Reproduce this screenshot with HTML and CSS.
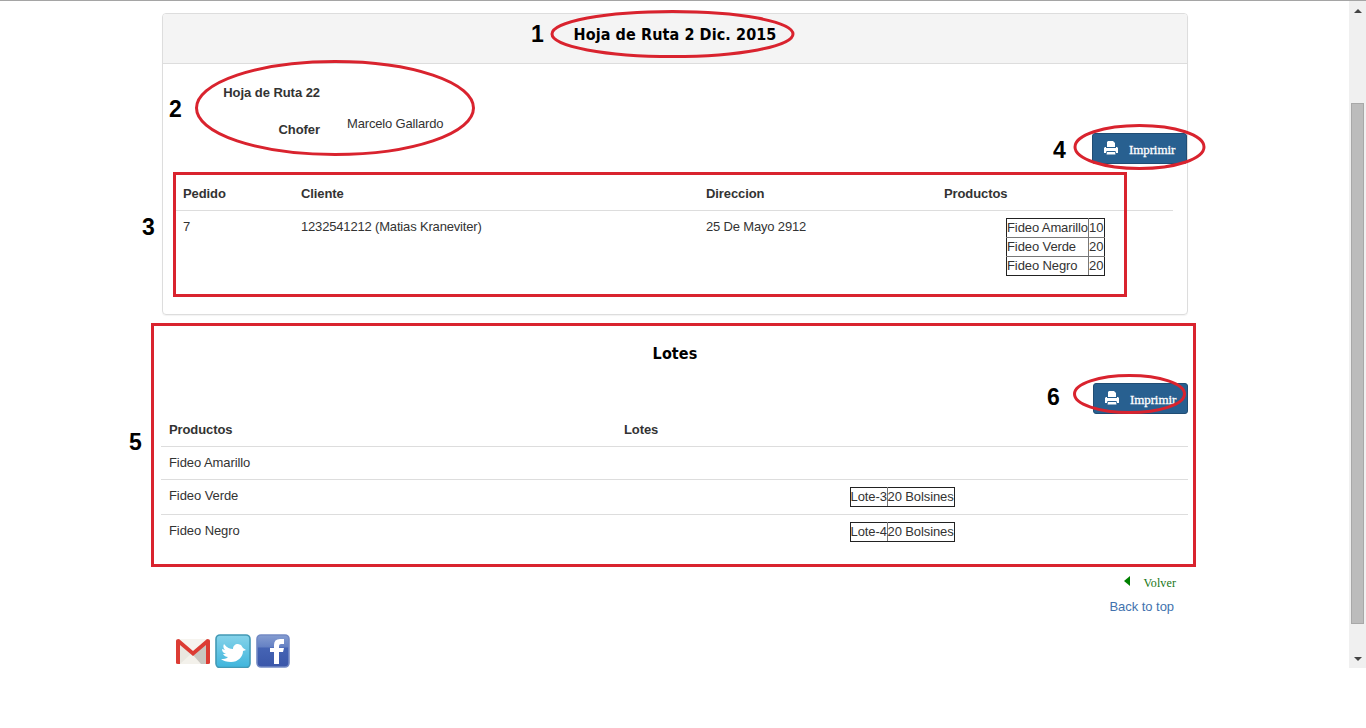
FILE: index.html
```html
<!DOCTYPE html>
<html lang="es">
<head>
<meta charset="utf-8">
<title>Hoja de Ruta</title>
<link rel="stylesheet" href="styles.css">
</head>
<body>
<div class="viewport">
  <main class="container">
    <section class="panel">
      <header class="panel-heading"><h1 class="title">Hoja de Ruta 2 Dic. 2015</h1></header>
      <div class="panel-body">
        <div class="info">
          <span class="label">Hoja de Ruta 22</span><span></span>
          <span class="label">Chofer</span><span class="value">Marcelo Gallardo</span>
        </div>
        <div class="actions">
          <button class="btn"><svg class="printer" viewBox="0 0 14 14"><path d="M4 0h5l2 2v4H3V1z M1 6h1v1h10V6h1l1 1v5h-2l-.5-2h-9L2 12H0V7z M3 11h8l.5 2.500h-9z"/></svg><span class="btn-text">Imprimir</span></button>
        </div>
        <table class="table orders">
          <thead><tr><th class="c-order">Pedido</th><th class="c-client">Cliente</th><th class="c-address">Direccion</th><th>Productos</th></tr></thead>
          <tbody><tr><td>7</td><td>1232541212 (Matias Kraneviter)</td><td>25 De Mayo 2912</td><td>
            <table class="inner inner-products">
              <tr><td class="name">Fideo Amarillo</td><td>10</td></tr>
              <tr><td class="name">Fideo Verde</td><td>20</td></tr>
              <tr><td class="name">Fideo Negro</td><td>20</td></tr>
            </table></td></tr></tbody>
        </table>
      </div>
    </section>
    <section class="lots">
      <h2 class="title">Lotes</h2>
      <div class="actions">
        <button class="btn"><svg class="printer" viewBox="0 0 14 14"><path d="M4 0h5l2 2v4H3V1z M1 6h1v1h10V6h1l1 1v5h-2l-.5-2h-9L2 12H0V7z M3 11h8l.5 2.500h-9z"/></svg><span class="btn-text">Imprimir</span></button>
      </div>
      <table class="table">
        <thead><tr><th class="c-product">Productos</th><th>Lotes</th></tr></thead>
        <tbody>
          <tr><td>Fideo Amarillo</td><td></td></tr>
          <tr class="tall"><td>Fideo Verde</td><td><table class="inner inner-lots"><tr><td class="lot">Lote-3</td><td>20 Bolsines</td></tr></table></td></tr>
          <tr class="tall"><td>Fideo Negro</td><td><table class="inner inner-lots"><tr><td class="lot">Lote-4</td><td>20 Bolsines</td></tr></table></td></tr>
        </tbody>
      </table>
    </section>
    <nav class="links">
      <a class="back"><svg class="arrow" viewBox="0 0 6 10"><path d="M6 0v10L0 5z"/></svg>Volver</a>
      <a class="top">Back to top</a>
    </nav>
    <footer class="social">
      <svg class="gmail" viewBox="0 0 36 26">
        <rect x="1" y="1" width="34" height="25" rx="2" fill="#e9e7e0"/>
        <path d="M5 26 18 14 31 26z" fill="#f3f1eb"/><path d="M31 5v21H26l-8-9z" fill="#c9c7c1"/>
        <path d="M3 1h30L18 14z" fill="#f6f4ef"/>
        <path d="M1 3q0-2 3-2l14 12L32 1q3 0 3 2v22q0 1-2 1h-2V7L18 18 5 7v19H3q-2 0-2-1z" fill="#dc3c34"/>
      </svg>
      <svg class="twitter" viewBox="0 0 36 34">
        <defs><linearGradient id="sky" x2="0" y2="1"><stop offset="0" stop-color="#86d3ea"/><stop offset="1" stop-color="#3fb5dc"/></linearGradient></defs>
        <rect x="1" y="1" width="34" height="32.500" rx="4" fill="url(#sky)" stroke="#4399b5" stroke-width="1.6"/>
        <path d="M9 10c3 4 6 5 9 5 0-3 2-5 5-5l3 1 2 3 3 2-3 1c0 6-5 11-12 11-4 0-8-1-10-3 3 0 5 0 7-2-2 0-4-1-5-3h3c-3-1-4-3-4-5l3 1c-2-2-2-4-1-6z" fill="#fff"/>
      </svg>
      <svg class="facebook" viewBox="0 0 34 34">
        <defs><linearGradient id="royal" x2="0" y2="1"><stop offset="0" stop-color="#859dd1"/><stop offset=".38" stop-color="#6480c3"/><stop offset=".4" stop-color="#4564b4"/><stop offset="1" stop-color="#3a56a9"/></linearGradient></defs>
        <rect x="1" y="1" width="32" height="32" rx="4" fill="url(#royal)" stroke="#7389c4" stroke-width="1.6"/>
        <path d="M18 30V18h-4v-4h4v-3q0-6 6-6h4v5h-3q-2 0-2 2v2h5l-1 4h-4v12z" fill="#fff"/>
      </svg>
    </footer>
  </main>
  <aside class="scrollbar">
    <svg class="step" viewBox="0 0 8 4"><path d="M4 0l4 4H0z"/></svg>
    <div class="thumb"></div>
    <svg class="step" viewBox="0 0 8 4"><path d="M0 0h8L4 4z"/></svg>
  </aside>
</div>
<svg class="notes" viewBox="0 0 1366 728">
  <g class="marks">
    <ellipse cx="672.5" cy="34" rx="120.5" ry="22.5"/>
    <ellipse cx="335" cy="108" rx="138.5" ry="46.5"/>
    <ellipse cx="1139.5" cy="147" rx="64.5" ry="21.5"/>
    <ellipse cx="1129.5" cy="394" rx="55" ry="18.5"/>
    <rect x="174.5" y="173.5" width="951" height="122"/>
    <rect x="152.5" y="324.5" width="1042" height="241"/>
  </g>
  <g class="numbers">
    <text x="531" y="42">1</text><text x="169" y="117">2</text><text x="142" y="235">3</text>
    <text x="1053" y="158">4</text><text x="129" y="450">5</text><text x="1047" y="405">6</text>
  </g>
</svg>
</body>
</html>
```
FILE: styles.css
```css
* { box-sizing: border-box; }
body { margin: 0; background: #fff; color: #333; font: 13px/18px "Liberation Sans", Arial, sans-serif; overflow: hidden; }
.viewport { display: flex; justify-content: space-between; height: 668px; border-top: 1px solid #a5a5a5; }
.container { width: 1026px; margin-left: 162px; padding-top: 12px; }
.panel { height: 302px; border: 1px solid #ddd; border-radius: 4px; box-shadow: 0 1px 1px rgba(0,0,0,.05); }
.panel-heading { height: 50px; padding-top: 9px; background: #f4f4f4; border-bottom: 1px solid #ddd; border-radius: 3px 3px 0 0; }
.title { margin: 0; font: bold 16px/24px "DejaVu Sans Condensed", "DejaVu Sans", sans-serif; font-stretch: condensed; letter-spacing: .1px; color: #000; text-align: center; }
.panel-body { padding: 20px 0 0; }
.info { display: grid; grid-template-columns: 157px 1fr; column-gap: 27px; row-gap: 19px; height: 49px; }
.label { font-weight: bold; text-align: right; letter-spacing: -.05px; }
.value { margin-top: -6px; letter-spacing: -.17px; }
.actions { display: flex; justify-content: flex-end; }
.btn { display: flex; align-items: center; width: 95px; height: 31px; padding: 0 0 0 11px; border: 1px solid #204d74; border-radius: 3px; background: #286090; color: #fff; }
.btn-text { margin: 3px 0 0 11px; font: 13px/16px "Liberation Serif", serif; letter-spacing: -.1px; -webkit-text-stroke: .3px #fff; }
.printer { width: 14px; height: 14px; fill: #fff; margin-top: -2px; }
.table { width: 100%; table-layout: fixed; border-collapse: collapse; }
.table th, .table td { padding: 8px; text-align: left; vertical-align: top; }
.table th { height: 33px; padding-bottom: 6px; letter-spacing: -.1px; }
.table td { letter-spacing: -.17px; }
.table > tbody > tr { height: 33px; border-top: 1px solid #ddd; }
.table > tbody > tr > td { padding-top: 7px; padding-bottom: 0; }
.table > tbody > .tall { height: 35px; }
.orders { width: 998px; margin: 13px 0 0 12px; }
.c-order { width: 118px; }
.c-client { width: 405px; }
.c-address { width: 238px; }
.c-product { width: 455px; }
.lots .table > tbody > tr > td:first-child { letter-spacing: -.08px; }
.table .inner { margin: 0 auto; border-collapse: collapse; border: 1px solid #222; table-layout: fixed; }
.table .inner tr { height: 19px; border: 0; }
.table .inner tr td { padding: 0; height: 19px; border: 1px solid #777; white-space: nowrap; line-height: 17px; letter-spacing: -.1px; }
.table .inner tr:first-child td { border-top-color: #222; }
.table .inner tr:last-child td { border-bottom-color: #222; }
.table .inner tr td:first-child { border-left-color: #222; }
.table .inner tr td:last-child { border-right-color: #222; }
.inner-products { width: 99px; position: relative; left: 1px; }
.inner-products .name { width: 82px; }
.inner-lots { width: 105px; }
.inner-lots .lot { width: 37px; }
.lots { height: 257px; padding-top: 27px; }
.lots .actions { margin-top: 17px; }
.lots .table { width: 1027px; margin-left: -1px; margin-top: -1px; }
.links { display: flex; flex-direction: column; align-items: flex-end; height: 57px; }
.back { display: flex; align-items: center; gap: 14px; margin-right: 12px; font: 12px/18px "Liberation Serif", serif; letter-spacing: .1px; color: #167516; padding-top: 2px; }
.arrow { width: 6px; height: 10px; margin-top: -4px; fill: #008000; }
.top { margin: 6px 14px 0 0; color: #4272ae; letter-spacing: -.05px; }
.social { display: flex; align-items: center; height: 38px; padding: 5px 0 0 13px; }
.gmail { width: 36px; height: 26px; }
.twitter { width: 36px; height: 34px; margin-left: 4px; }
.facebook { width: 34px; height: 34px; margin-left: 5px; }
.scrollbar { display: flex; flex-direction: column; align-items: center; justify-content: space-between; width: 17px; padding: 8px 0 7px; background: #f0f0f0; }
.step { width: 8px; height: 4px; fill: #444; }
.thumb { width: 13px; height: 521px; margin-top: 57px; background: #bcbcbc; border: 1px solid #a8a8a8; }
.notes { position: absolute; left: 0; top: 0; width: 1366px; height: 728px; pointer-events: none; }
.marks { fill: none; stroke: #d9232e; stroke-width: 3; }
.numbers { font: bold 23px "Liberation Sans", Arial, sans-serif; fill: #000; }
```
